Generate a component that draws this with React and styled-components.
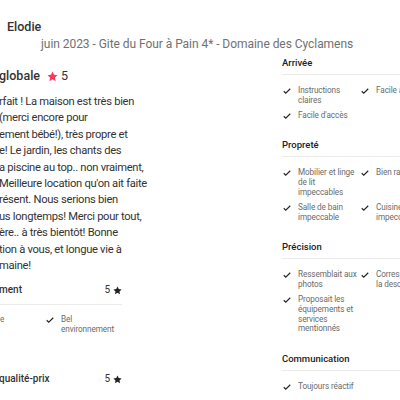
import React from 'react'
import styled, { createGlobalStyle } from 'styled-components';

const Global = createGlobalStyle`
  html, body { margin: 0; padding: 0; background: #fff; }
  body { font-family: Roboto, "Open Sans", sans-serif; color: #222; }
`

const Page = styled.div`
  width: 400px;
  height: 400px;
  overflow: hidden;
  background: #fff;
`
const Header = styled.div`
  padding-top: 19px;
  display: flex;
  flex-direction: column;
`
const Name = styled.div`
  margin-left: 7px;
  font-size: 12.5px;
  line-height: 16px;
  font-weight: 500;
  color: #333;
`
const Stay = styled.div`
  margin-left: 41px;
  margin-top: 1px;
  font-size: 12px;
  letter-spacing: -0.05px;
  line-height: 16px;
  color: #717171;
  white-space: nowrap;
`
const Columns = styled.div`
  display: flex;
  align-items: flex-start;
`
const Left = styled.div`
  width: 160px;
  margin-left: -1px;
  padding-top: 15px;
  flex-shrink: 0;
`
const Right = styled.div`
  margin-left: 123px;
  padding-top: 5px;
  width: 170px;
  flex-shrink: 0;
`
const Overall = styled.div`
  display: flex;
  align-items: center;
  gap: 7px;
  font-size: 12.5px;
  line-height: 18px;
  font-weight: 500;
  color: #333;
  span { font-weight: 400; }
`
const Review = styled.div`
  margin-top: 9px;
  font-size: 11.2px;
  letter-spacing: -0.3px;
  line-height: 16.4px;
  color: #333;
  white-space: nowrap;
`
const CatHead = styled.div`
  width: 123px;
  display: flex;
  justify-content: space-between;
  align-items: center;
  margin-top: ${p => p.$gap || 0}px;
  font-size: 10px;
  line-height: 14px;
  font-weight: 500;
  color: #333;
`
const Score = styled.div`
  display: flex;
  align-items: center;
  gap: 3px;
  font-weight: 400;
`
const Divider = styled.div`
  height: 1px;
  background: #ebebeb;
  width: ${p => p.$w || 123}px;
  margin-top: ${p => p.$top}px;
`
const Section = styled.div`
  margin-top: ${p => p.$gap || 0}px;
`
const Heading = styled.div`
  font-size: 9.5px;
  line-height: 12px;
  font-weight: 500;
  color: #222;
`
const Checks = styled.div`
  display: grid;
  grid-template-columns: ${p => p.$cols || '78px 78px'};
  row-gap: 5px;
  margin-top: ${p => p.$top || 11}px;
  margin-left: ${p => p.$left || 1}px;
`
const Check = styled.div`
  display: flex;
  gap: 7px;
  align-items: flex-start;
  font-size: 8.2px;
  letter-spacing: -0.1px;
  line-height: 9.8px;
  color: #6a6a6a;
  svg { flex-shrink: 0; margin-top: 1px; }
  div { width: 62px; }
`

const Tick = () => (
  <svg width="8" height="8" viewBox="0 0 32 32" fill="none">
    <path d="M3 17l8 8L29 7" stroke="#222" strokeWidth="4.5" />
  </svg>
)

const Star = ({ color = '#222', size = 9 }) => (
  <svg width={size} height={size} viewBox="0 0 32 32">
    <path fill={color} d="M16 1.5l4.4 9.6 10.3 1.1-7.7 7 2.2 10.3L16 24.3l-9.2 5.2L9 19.2l-7.7-7 10.3-1.1z" />
  </svg>
)

const Item = ({ children }) => (
  <Check><Tick /><div>{children}</div></Check>
)

const reviewLines = [
  "rfait ! La maison est très bien",
  "(merci encore pour",
  "ement bébé!), très propre et",
  "e! Le jardin, les chants des",
  "a piscine au top.. non vraiment,",
  "Meilleure location qu'on ait faite",
  "résent. Nous serions bien",
  "us longtemps! Merci pour tout,",
  "ère.. à très bientôt! Bonne",
  "tion à vous, et longue vie à",
  "maine!",
]

const App = () => {
  return (
    <Page>
      <Global />
      <Header>
        <Name>Elodie</Name>
        <Stay>juin 2023 - Gite du Four à Pain 4* - Domaine des Cyclamens</Stay>
      </Header>
      <Columns>
        <Left>
          <Overall>globale <Score><Star color="#ff385c" size={11} /><span>5</span></Score></Overall>
          <Review>
            {reviewLines.map((l, i) => <div key={i}>{l}</div>)}
          </Review>
          <CatHead $gap={9}>ment<Score>5 <Star /></Score></CatHead>
          <Divider $top={7} />
          <Checks $top={10} $cols="46px 80px" $left={1}>
            <Check><div>e</div></Check>
            <Item>Bel environnement</Item>
          </Checks>
          <CatHead $gap={37}>qualité-prix<Score>5 <Star /></Score></CatHead>
        </Left>
        <Right>
          <Section>
            <Heading>Arrivée</Heading>
            <Divider $top={5} $w={170} />
            <Checks>
              <Item>Instructions claires</Item>
              <Item>Facile à trouver</Item>
              <Item>Facile d'accès</Item>
            </Checks>
          </Section>
          <Section $gap={19}>
            <Heading>Propreté</Heading>
            <Divider $top={5} $w={170} />
            <Checks>
              <Item>Mobilier et linge de lit impeccables</Item>
              <Item>Bien rangé</Item>
              <Item>Salle de bain impeccable</Item>
              <Item>Cuisine impeccable</Item>
            </Checks>
          </Section>
          <Section $gap={19}>
            <Heading>Précision</Heading>
            <Divider $top={5} $w={170} />
            <Checks>
              <Item>Ressemblait aux photos</Item>
              <Item>Correspondait à la description</Item>
              <Item>Proposait les équipements et services mentionnés</Item>
            </Checks>
          </Section>
          <Section $gap={19}>
            <Heading>Communication</Heading>
            <Divider $top={5} $w={170} />
            <Checks>
              <Item>Toujours réactif</Item>
            </Checks>
          </Section>
        </Right>
      </Columns>
    </Page>
  )
}

export default App;
